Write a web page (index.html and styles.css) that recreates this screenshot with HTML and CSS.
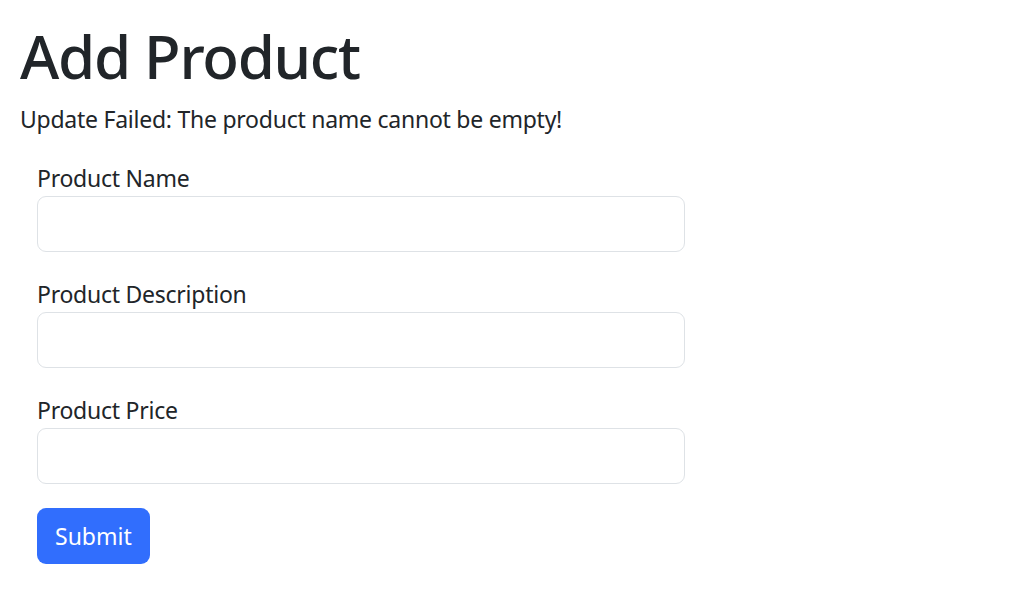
FILE: index.html
```html
<!DOCTYPE html>
<html lang="en">
<head>
<meta charset="utf-8">
<title>Add Product</title>
<link rel="stylesheet" href="styles.css">
</head>
<body>
<div class="container">
  <h1 class="title">Add Product</h1>
  <p class="message">Update Failed: The product name cannot be empty!</p>
  <form class="product-form">
    <div class="field">
      <label class="field-label" for="name">Product Name</label>
      <input class="field-input" id="name" type="text">
    </div>
    <div class="field">
      <label class="field-label" for="desc">Product Description</label>
      <input class="field-input" id="desc" type="text">
    </div>
    <div class="field">
      <label class="field-label" for="price">Product Price</label>
      <input class="field-input" id="price" type="text">
    </div>
    <button class="submit-btn" type="button">Submit</button>
  </form>
</div>
</body>
</html>
```

FILE: styles.css
```css
html, body {
  margin: 0;
  padding: 0;
  background: #ffffff;
}
body {
  font-family: "Noto Sans", "Open Sans", sans-serif;
  color: #212529;
  font-size: 23px;
  letter-spacing: -0.25px;
  line-height: 36px;
}
.container {
  padding: 20px 20px 0 20px;
}
.title {
  margin: 0 0 9px 0;
  font-size: 60px;
  letter-spacing: -1.3px;
  font-weight: 500;
  line-height: 72px;
}
.message {
  margin: 0 0 23px 0;
}
.product-form {
  padding-left: 17px;
  width: 648px;
}
.field {
  margin-bottom: 24px;
}
.field-label {
  display: block;
}
.field-input {
  display: block;
  box-sizing: border-box;
  width: 648px;
  height: 56px;
  border: 1px solid #dee2e6;
  border-radius: 9px;
  margin: 0;
  padding: 9px 18px;
  font: inherit;
}
.submit-btn {
  box-sizing: border-box;
  height: 56px;
  padding: 0 18px;
  border: none;
  border-radius: 9px;
  background: #316efd;
  color: #ffffff;
  font: inherit;
}
```
